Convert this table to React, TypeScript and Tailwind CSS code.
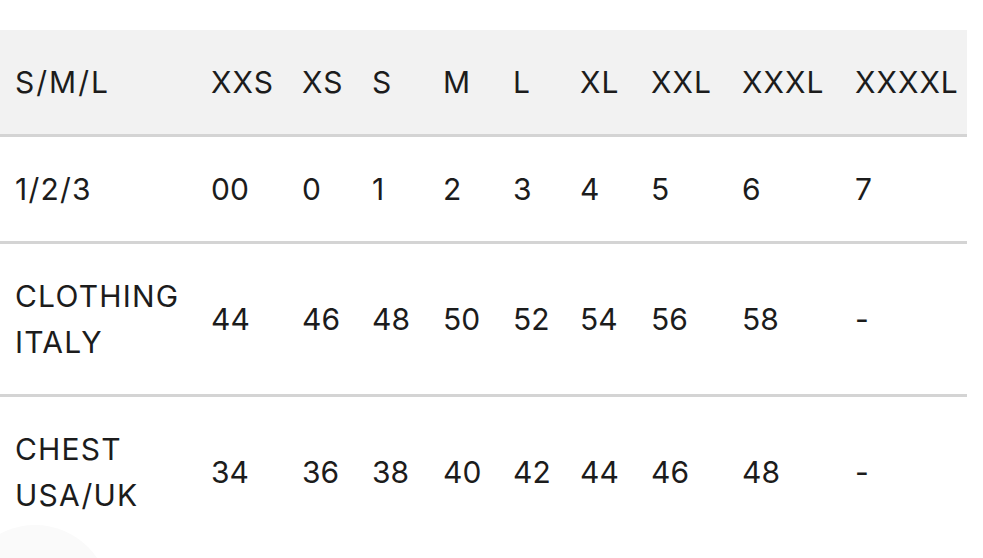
const headers = ['S/M/L', 'XXS', 'XS', 'S', 'M', 'L', 'XL', 'XXL', 'XXXL', 'XXXXL'];

const rows: string[][] = [
  ['1/2/3', '00', '0', '1', '2', '3', '4', '5', '6', '7'],
  ['CLOTHING ITALY', '44', '46', '48', '50', '52', '54', '56', '58', '-'],
  ['CHEST USA/UK', '34', '36', '38', '40', '42', '44', '46', '48', '-'],
];

const widths = [196, 91, 70, 71, 70, 67, 71, 91, 113, 127];

export default function App() {
  return (
    <div className="relative h-[558px] w-[983px] overflow-hidden bg-white pt-[30px] font-['Inter','Liberation_Sans',Arial,sans-serif] text-[30px] leading-[46px] text-[#1c1c1c]">
      <table className="w-[967px] table-fixed border-collapse">
        <colgroup>
          {widths.map((w, i) => (
            <col key={i} style={{ width: w }} />
          ))}
        </colgroup>
        <thead>
          <tr className="border-b-[3px] border-[#d4d4d4] bg-[#f2f2f2]">
            {headers.map((h, i) => (
              <th
                key={h}
                className={`h-[105px] whitespace-nowrap pl-[15px] text-left align-middle font-normal ${i === 0 ? 'tracking-[2px]' : 'tracking-[1px]'}`}
              >
                {h}
              </th>
            ))}
          </tr>
        </thead>
        <tbody>
          {rows.map((row, r) => (
            <tr key={r} className={r < rows.length - 1 ? 'border-b-[3px] border-[#d4d4d4]' : ''}>
              {row.map((cell, c) => (
                <td
                  key={c}
                  className={`py-[29px] pl-[15px] pr-[8px] text-left align-middle ${c === 0 ? 'tracking-[1.2px]' : ''}`}
                >
                  {cell}
                </td>
              ))}
            </tr>
          ))}
        </tbody>
      </table>
      {/* floating button shadow peeking in at the bottom */}
      <div className="absolute left-[-40px] top-[525px] h-[150px] w-[150px] rounded-full bg-[#fafafa]" />
    </div>
  );
}
